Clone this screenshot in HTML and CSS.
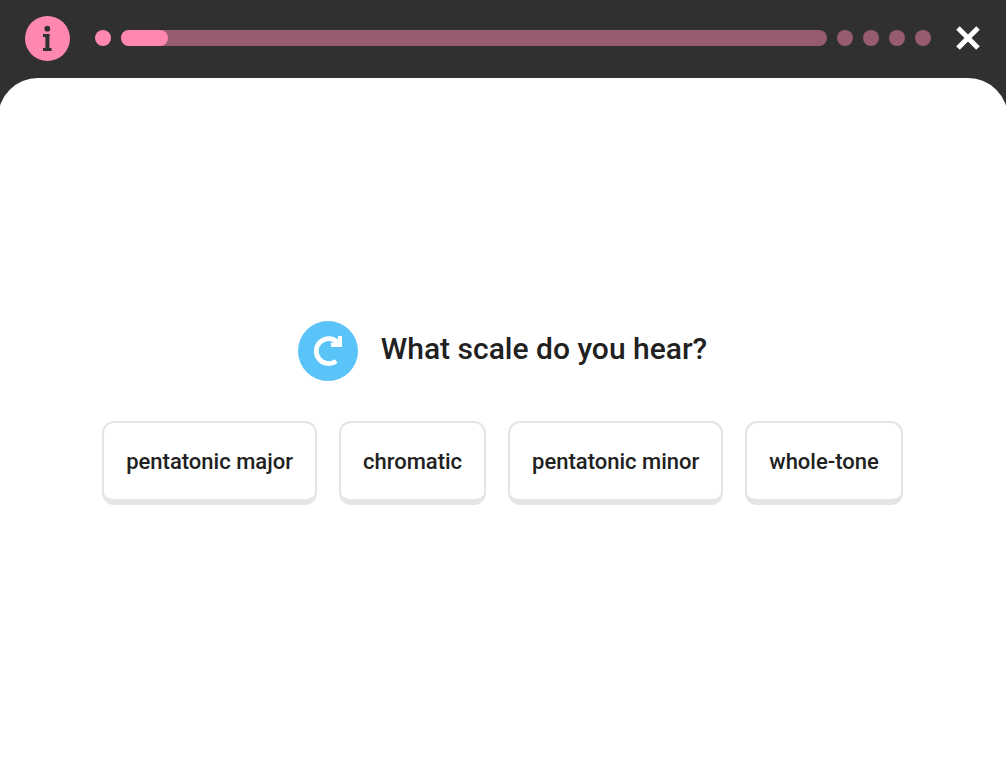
FILE: index.html
```html
<!DOCTYPE html>
<html lang="en">
<head>
    <meta charset="UTF-8">
    <meta name="viewport" content="width=device-width, initial-scale=1.0">
    <title>Scale Quiz</title>
    <link rel="stylesheet" href="styles.css">
</head>

<body>
    <header class="topbar">
        <button class="info-btn" aria-label="Info">
            <svg width="45" height="45" viewBox="0 0 45 45" fill="#303030">
                <circle cx="22.3" cy="12.7" r="2.9"/>
                <rect x="18" y="18" width="6.4" height="3"/>
                <rect x="20.4" y="18" width="4" height="17"/>
                <rect x="18" y="32" width="8.6" height="3"/>
            </svg>
        </button>

        <div class="progress">
            <span class="dot done"></span>
            <div class="bar"><div class="bar-fill"></div></div>
            <span class="dot"></span>
            <span class="dot"></span>
            <span class="dot"></span>
            <span class="dot"></span>
        </div>

        <button class="close-btn" aria-label="Close">
            <svg width="24" height="24" viewBox="0 0 24 24" stroke="white" stroke-width="5">
                <path d="M2 2L22 22M22 2L2 22"/>
            </svg>
        </button>
    </header>

    <main class="sheet">
        <div class="question">
            <button class="replay-btn" aria-label="Play again">
                <svg width="60" height="60" viewBox="0 0 60 60" fill="none">
                    <path d="M38.2 40.1A12.5 12.5 0 1 1 39.6 21.2" stroke="white" stroke-width="4.8"/>
                    <path d="M44 15V26H33V21.5H37L40 18.5V15Z" fill="white"/>
                </svg>
            </button>
            <h1>What scale do you hear?</h1>
        </div>

        <div class="answers">
            <button class="answer">pentatonic major</button>
            <button class="answer">chromatic</button>
            <button class="answer">pentatonic minor</button>
            <button class="answer">whole-tone</button>
        </div>
    </main>
</body>
</html>
```

FILE: styles.css
```css
* {
    box-sizing: border-box;
}
body {
    margin: 0;
    min-height: 100vh;
    display: flex;
    flex-direction: column;
    overflow-x: hidden;
    background-color: #303030;
    color: #212121;
    font-family: Roboto, sans-serif;
}
button {
    padding: 0;
    border: none;
    background: none;
    color: inherit;
    font-family: inherit;
    cursor: pointer;
}
svg {
    display: block;
}
.topbar {
    display: flex;
    align-items: center;
    gap: 25px;
    padding: 16px 26px 17px 25px;
}
.info-btn {
    border-radius: 50%;
    background-color: #ff87b0;
}
.progress {
    flex: 1;
    display: flex;
    align-items: center;
    gap: 10px;
    padding-bottom: 1px;
}
.dot {
    width: 16px;
    height: 16px;
    border-radius: 50%;
    background-color: #985c71;
}
.dot.done {
    background-color: #ff87b0;
}
.bar {
    flex: 1;
    height: 16px;
    border-radius: 8px;
    background-color: #985c71;
}
.bar-fill {
    width: 47px;
    height: 16px;
    border-radius: 8px;
    background-color: #ff87b0;
}
.close-btn {
    padding-bottom: 1px;
}
.sheet {
    flex: 1;
    margin: 0 -2px;
    padding: 20px 21px 38px 20px;
    display: flex;
    flex-direction: column;
    align-items: center;
    justify-content: center;
    gap: 40px;
    border-radius: 40px 40px 0 0;
    background-color: white;
}
.question {
    display: flex;
    align-items: center;
    gap: 23px;
}
.replay-btn {
    border-radius: 50%;
    background-color: #5ac4f8;
}
h1 {
    margin: 0;
    padding-bottom: 4px;
    font-size: 30px;
    font-weight: 500;
}
.answers {
    display: flex;
    flex-wrap: wrap;
    justify-content: center;
    gap: 22px;
}
.answer {
    padding: 25px 22px 23px;
    border: 2px solid #e5e5e5;
    border-bottom-width: 6px;
    border-radius: 12px;
    background-color: white;
    font-size: 22px;
    font-weight: 500;
    line-height: 28px;
}
.answer:hover {
    background-color: #f7f7f7;
}
```
